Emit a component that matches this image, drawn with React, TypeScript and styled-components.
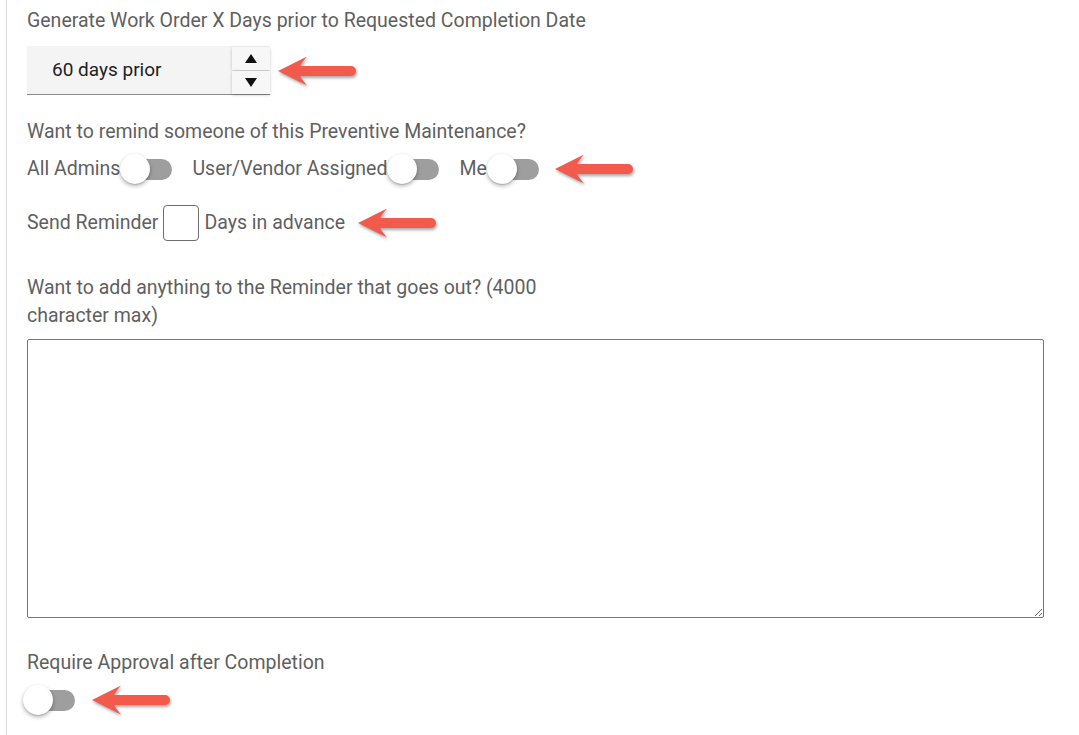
import { FC } from 'react'
import styled, { createGlobalStyle } from 'styled-components'

const GlobalStyle = createGlobalStyle`
    body {
        margin: 0;
        background: #ffffff;
        font-family: Roboto, "Liberation Sans", Arial, sans-serif;
    }
`

const Page = styled.div`
    margin-left: 6px;
    border-left: 1px solid #d9d9d9;
    padding: 7px 35px 20px 20px;
    min-height: 100vh;
    box-sizing: border-box;
    font-size: 19.5px;
    line-height: 28px;
    color: #5f5f5f;
`

const Label = styled.div<{ $top?: number; $maxWidth?: number }>`
    margin-top: ${p => p.$top ?? 0}px;
    max-width: ${p => p.$maxWidth ? `${p.$maxWidth}px` : 'none'};
`

const Row = styled.div<{ $top?: number; $height: number }>`
    display: flex;
    align-items: center;
    height: ${p => p.$height}px;
    margin-top: ${p => p.$top ?? 0}px;
`

const SelectBox = styled.div`
    display: flex;
    align-items: stretch;
    width: 243px;
    height: 49px;
    background: #f4f4f4;
    border-bottom: 1px solid #8a8a8a;
    box-sizing: border-box;
`

const SelectValue = styled.div`
    flex: 1;
    display: flex;
    align-items: center;
    padding-left: 25px;
    font-size: 19px;
    color: #222222;
`

const Spinner = styled.div`
    width: 38px;
    display: flex;
    flex-direction: column;
    gap: 1px;
    padding-top: 1px;
`

const SpinButton = styled.button`
    flex: 1;
    display: flex;
    align-items: center;
    justify-content: center;
    border: none;
    padding: 0;
    background: #f7f7f7;
    box-shadow: 0 1px 3px rgba(0, 0, 0, 0.22);
    cursor: pointer;
`

const ArrowMark = styled.svg<{ $gap: number }>`
    margin-left: ${p => p.$gap}px;
    width: 80px;
    height: 32px;
    flex-shrink: 0;
    filter: drop-shadow(1px 2px 1.5px rgba(0, 0, 0, 0.35));
`

const ToggleItem = styled.div<{ $last?: boolean }>`
    display: flex;
    align-items: center;
    margin-right: ${p => p.$last ? 0 : 20}px;
`

const SwitchWrap = styled.div<{ $shift?: number }>`
    position: relative;
    width: 52px;
    height: 30px;
    margin-left: ${p => p.$shift ?? 0}px;
    flex-shrink: 0;
`

const Track = styled.div`
    position: absolute;
    left: 4px;
    top: 5px;
    width: 48px;
    height: 21px;
    border-radius: 11px;
    background: #9e9e9e;
`

const Knob = styled.div`
    position: absolute;
    left: 0;
    top: 0;
    width: 30px;
    height: 30px;
    border-radius: 50%;
    background: #ffffff;
    box-shadow: 0 2px 4px rgba(0, 0, 0, 0.3), 0 1px 1px rgba(0, 0, 0, 0.12);
`

const DaysInput = styled.input`
    width: 36px;
    height: 36px;
    margin: 0 5px;
    box-sizing: border-box;
    border: 1px solid #6f6f6f;
    border-radius: 4px;
    background: #ffffff;
    font-size: 16px;
    text-align: center;
`

const Notes = styled.textarea`
    display: block;
    margin-top: 9px;
    width: 100%;
    height: 279px;
    box-sizing: border-box;
    border: 1px solid #767676;
    border-radius: 2px;
    font-family: inherit;
    font-size: 16px;
    padding: 8px;
`

const Arrow: FC<{ gap: number }> = ({ gap }) => (
    <ArrowMark $gap={gap} viewBox="0 0 80 32">
        <path
            d="M1 16 L30 1.5 Q24.5 8 23 11 L74 11 A5 5 0 0 1 74 21 L23 21 Q24.5 24 30 30.5 Z"
            fill="#f25a4c"
        />
    </ArrowMark>
)

const Triangle: FC<{ down?: boolean }> = ({ down }) => (
    <svg width="12" height="9" viewBox="0 0 12 9">
        <path d={down ? 'M0 0 L12 0 L6 9 Z' : 'M6 0 L12 9 L0 9 Z'} fill="#111111" />
    </svg>
)

const Switch: FC<{ shift?: number }> = ({ shift }) => (
    <SwitchWrap $shift={shift}>
        <Track />
        <Knob />
    </SwitchWrap>
)

export default function App() {
    return (
        <>
            <GlobalStyle />
            <Page>
                <Label>Generate Work Order X Days prior to Requested Completion Date</Label>
                <Row $top={11} $height={49}>
                    <SelectBox>
                        <SelectValue>60 days prior</SelectValue>
                        <Spinner>
                            <SpinButton><Triangle /></SpinButton>
                            <SpinButton><Triangle down /></SpinButton>
                        </Spinner>
                    </SelectBox>
                    <Arrow gap={7} />
                </Row>

                <Label $top={23}>Want to remind someone of this Preventive Maintenance?</Label>
                <Row $top={8} $height={30}>
                    <ToggleItem>All Admins<Switch /></ToggleItem>
                    <ToggleItem>User/Vendor Assigned<Switch /></ToggleItem>
                    <ToggleItem $last>Me<Switch /></ToggleItem>
                    <Arrow gap={15} />
                </Row>

                <Row $top={21} $height={36}>
                    <Label>Send Reminder</Label>
                    <DaysInput type="text" />
                    <Label>Days in advance</Label>
                    <Arrow gap={12} />
                </Row>

                <Label $top={33} $maxWidth={560}>
                    Want to add anything to the Reminder that goes out? (4000 character max)
                </Label>
                <Notes />

                <Label $top={31}>Require Approval after Completion</Label>
                <Row $top={8} $height={30}>
                    <Switch shift={-4} />
                    <Arrow gap={16} />
                </Row>
            </Page>
        </>
    )
}
